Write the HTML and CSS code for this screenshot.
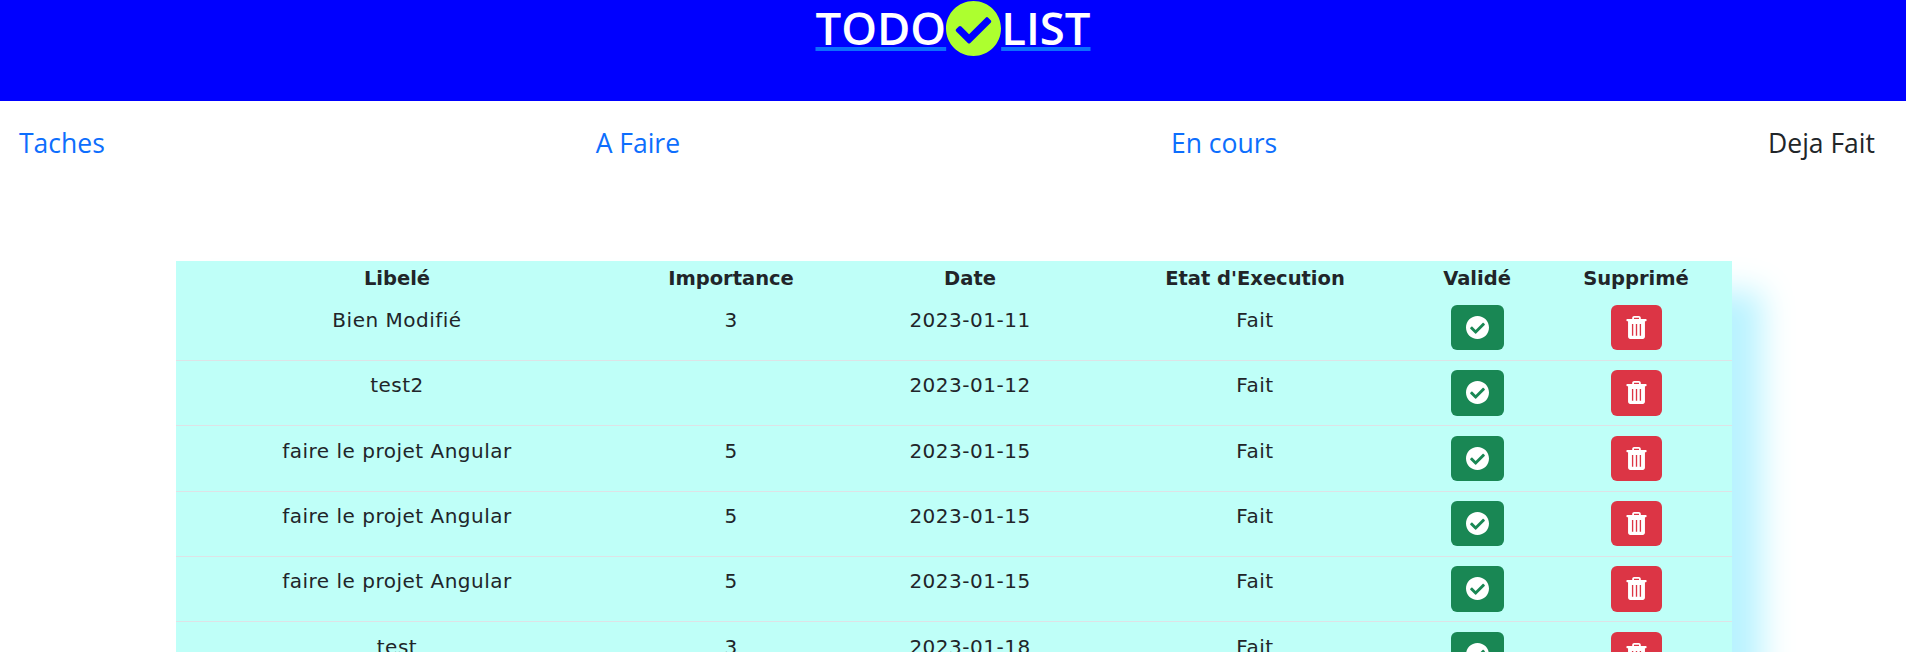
FILE: index.html
```html
<!DOCTYPE html>
<html lang="fr">
<head>
    <meta charset="UTF-8">
    <meta name="viewport" content="width=device-width, initial-scale=1.0">
    <title>Todo List</title>
    <link rel="stylesheet" href="styles.css">
</head>
<body>
    <svg class="symboles">
        <symbol id="i-check" viewBox="8 8 496 496"><path d="M504 256c0 136.967-111.033 248-248 248S8 392.967 8 256 119.033 8 256 8s248 111.033 248 248zM227.314 387.314l184-184c6.248-6.248 6.248-16.379 0-22.627l-22.627-22.627c-6.248-6.249-16.379-6.249-22.628 0L216 308.118l-70.059-70.059c-6.248-6.248-16.379-6.248-22.628 0l-22.627 22.627c-6.248 6.248-6.248 16.379 0 22.627l104 104c6.249 6.249 16.379 6.249 22.628.001z"/></symbol>
        <symbol id="i-trash" viewBox="0 0 448 512"><path fill-rule="evenodd" d="M16 64h112V44C128 20 148 0 172 0h104c24 0 44 20 44 44v20h112c9 0 16 7 16 16v22c0 9-7 16-16 16h-20v346c0 26-22 48-48 48H84c-26 0-48-22-48-48V118H16c-9 0-16-7-16-16V80c0-9 7-16 16-16zM168 64h112V44c0-2-2-4-4-4H172c-2 0-4 2-4 4zM122 176v264h30V176zM209 176v264h30V176zM296 176v264h30V176z"/></symbol>
    </svg>

    <header class="entete">
        <a class="logo" href="#">TODO</a>
        <svg class="logo-icone"><use href="#i-check"/></svg>
        <a class="logo" href="#">LIST</a>
    </header>

    <nav class="menu">
        <a href="#">Taches</a>
        <a href="#">A Faire</a>
        <a href="#">En cours</a>
        <a class="actif" href="#">Deja Fait</a>
    </nav>

    <table class="taches">
        <colgroup>
            <col class="c1"><col class="c2"><col class="c3"><col class="c4"><col class="c5"><col class="c6">
        </colgroup>
        <thead>
            <tr>
                <th>Libelé</th>
                <th>Importance</th>
                <th>Date</th>
                <th>Etat d'Execution</th>
                <th>Validé</th>
                <th>Supprimé</th>
            </tr>
        </thead>
        <tbody id="tablaTaches">
            <tr>
                <td>Bien Modifié</td><td>3</td><td>2023-01-11</td><td>Fait</td>
                <td><button class="btn vert"><svg class="ico"><use href="#i-check"/></svg></button></td>
                <td><button class="btn rouge"><svg class="ico"><use href="#i-trash"/></svg></button></td>
            </tr>
            <tr>
                <td>test2</td><td></td><td>2023-01-12</td><td>Fait</td>
                <td><button class="btn vert"><svg class="ico"><use href="#i-check"/></svg></button></td>
                <td><button class="btn rouge"><svg class="ico"><use href="#i-trash"/></svg></button></td>
            </tr>
            <tr>
                <td>faire le projet Angular</td><td>5</td><td>2023-01-15</td><td>Fait</td>
                <td><button class="btn vert"><svg class="ico"><use href="#i-check"/></svg></button></td>
                <td><button class="btn rouge"><svg class="ico"><use href="#i-trash"/></svg></button></td>
            </tr>
            <tr>
                <td>faire le projet Angular</td><td>5</td><td>2023-01-15</td><td>Fait</td>
                <td><button class="btn vert"><svg class="ico"><use href="#i-check"/></svg></button></td>
                <td><button class="btn rouge"><svg class="ico"><use href="#i-trash"/></svg></button></td>
            </tr>
            <tr>
                <td>faire le projet Angular</td><td>5</td><td>2023-01-15</td><td>Fait</td>
                <td><button class="btn vert"><svg class="ico"><use href="#i-check"/></svg></button></td>
                <td><button class="btn rouge"><svg class="ico"><use href="#i-trash"/></svg></button></td>
            </tr>
            <tr>
                <td>test</td><td>3</td><td>2023-01-18</td><td>Fait</td>
                <td><button class="btn vert"><svg class="ico"><use href="#i-check"/></svg></button></td>
                <td><button class="btn rouge"><svg class="ico"><use href="#i-trash"/></svg></button></td>
            </tr>
        </tbody>
    </table>
</body>
</html>
```

FILE: styles.css
```css
html {
    overflow: hidden;
    height: 652px;
}
body {
    margin: 0;
    font-family: 'Open Sans', 'Noto Sans', sans-serif;
    color: #212529;
    background-color: #fff;
}
a {
    text-decoration: none;
}
.symboles {
    display: none;
}
.entete {
    display: flex;
    justify-content: center;
    align-items: flex-start;
    height: 101px;
    background-color: #0000ff;
}
.logo {
    font-size: 45.5px;
    line-height: 54px;
    font-weight: 600;
    color: #fff;
    text-decoration: underline;
    text-decoration-color: #0d6efd;
    text-decoration-thickness: 4px;
}
.logo-icone {
    width: 55px;
    height: 55px;
    margin-top: 1px;
    fill: #adff2f;
}
.menu {
    display: flex;
    justify-content: space-between;
    padding: 24px 31px 0 19px;
    height: 160px;
    box-sizing: border-box;
    font-size: 26.5px;
    line-height: 36px;
}
.menu a {
    color: #0d6efd;
}
.menu a.actif {
    color: #212529;
}
.taches {
    width: 1556px;
    margin-left: 176px;
    border-collapse: separate;
    border-spacing: 0;
    table-layout: fixed;
    background-color: #bffff8;
    box-shadow: 30px 30px 30px #b9f3ff;
    font-family: 'DejaVu Sans', sans-serif;
    font-size: 20px;
    letter-spacing: 0.5px;
    text-align: center;
}
.c1 { width: 442px; }
.c2 { width: 226px; }
.c3 { width: 252px; }
.c4 { width: 318px; }
.c5 { width: 126px; }
.c6 { width: 192px; }
th {
    height: 34.67px;
    padding: 0;
    font-weight: 700;
    font-size: 19.5px;
    letter-spacing: 0;
}
td {
    height: 65.33px;
    box-sizing: border-box;
    padding: 9.33px 8px 9.67px;
    vertical-align: top;
    border-bottom: 1px solid #dee2e6;
    line-height: 30px;
}
.btn {
    display: block;
    height: 45.33px;
    margin: 0 auto;
    padding: 0;
    border: none;
    border-radius: 6px;
    cursor: pointer;
}
.vert {
    width: 53px;
    background-color: #198754;
}
.rouge {
    width: 51px;
    background-color: #dc3545;
}
.ico {
    display: block;
    width: 23px;
    height: 23px;
    margin: 0 auto;
    fill: #fff;
}
```
